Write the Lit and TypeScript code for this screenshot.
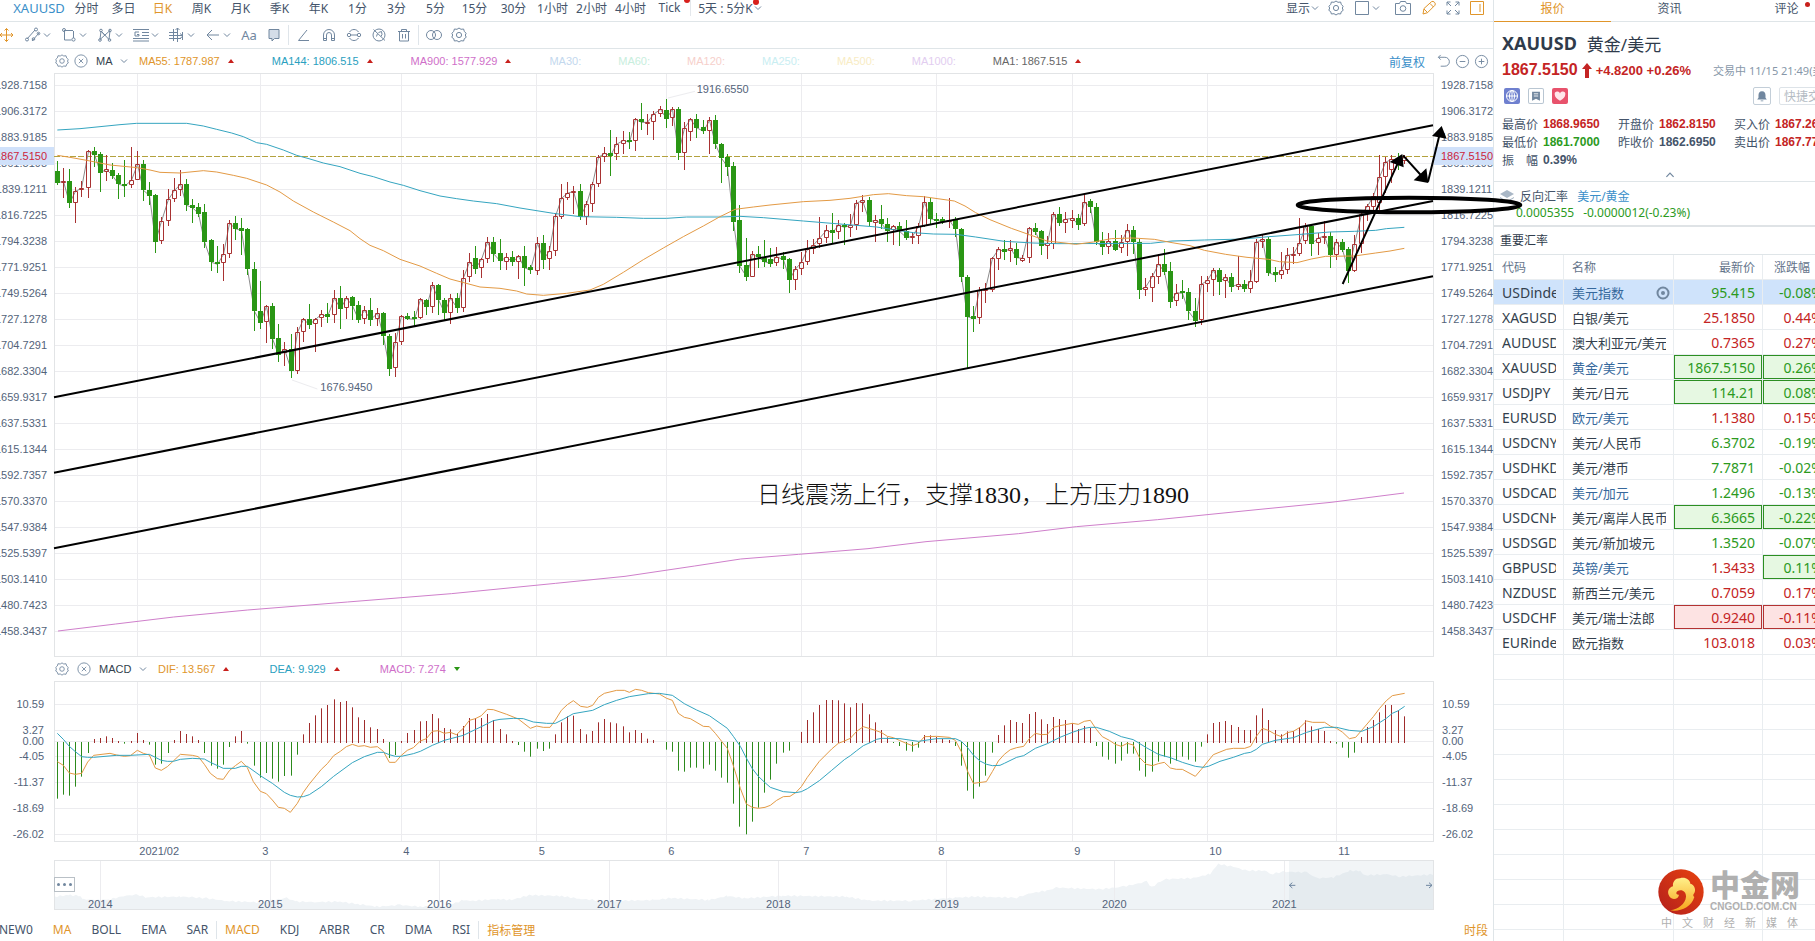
import { LitElement, html, svg, css, nothing } from "lit";
import { customElement } from "lit/decorators.js";
import { classMap } from "lit/directives/class-map.js";
import { styleMap } from "lit/directives/style-map.js";

const FIRST = 172;
const STEP = 18.45;

/* direction, high, body top, body bottom, low */
const CANDLES = `g272,303,338,345 r294,334,340,384 g297,334,400,414 r352,364,400,459 r334,355,361,380 r240,244,355,384 g231,244,254,290 g247,253,308,366 r255,298,307,332 g279,300,317,326
g309,315,342,386 g270,343,349,381 r231,331,346,355 r243,283,331,331 g270,283,361,392 g336,361,377,405 g372,375,515,548 r441,454,514,522 r357,388,454,467 r324,361,388,396
r301,343,361,378 g327,343,406,423 g387,405,413,459 g400,412,431,440 g402,427,515,534 g508,510,577,603 g528,577,583,608 r522,553,580,633 r450,460,553,563 g438,460,476,510
g445,475,482,555 g474,477,598,616 g576,598,724,783 g633,724,758,776 r705,709,757,819 g700,709,806,837 g763,804,854,876 r816,838,850,887 g792,838,902,924 r770,787,902,913
r744,748,787,815 g702,747,764,777 r744,748,763,846 r720,733,745,770 g699,733,740,758 r660,685,734,759 g648,685,716,777 r678,685,715,746 g678,682,707,750 g693,706,749,758
r709,721,748,761 g684,721,749,767 r715,730,748,767 g726,730,799,825 g793,799,896,918 r790,817,895,921 r736,739,817,824 g729,739,746,749 g723,742,748,768 r684,688,745,748
g688,691,712,736 r636,646,712,728 g642,646,689,734 g684,689,728,749 r673,685,728,762 g669,685,715,730 r600,623,715,725 r549,577,622,635 g528,565,596,611 r564,568,595,624
r501,517,568,579 g501,517,551,575 g507,550,574,599 r549,560,577,601 g543,561,577,588 r556,559,577,626 g528,559,593,647 g585,592,601,612 r502,520,604,614 g496,519,569,597
r529,542,568,599 r430,439,542,557 r342,385,442,446 r336,370,385,391 r349,364,370,432 g342,363,440,449 r393,403,440,464 r336,343,403,425 r255,262,343,351 r232,250,262,276
g180,250,257,317 r202,223,253,271 r184,211,223,251 g187,211,217,236 r144,148,214,242 g99,148,157,179 r132,157,163,194 r123,133,157,209 r109,118,133,140 g87,121,146,173
r112,118,145,167 g112,118,250,269 r157,175,250,299 r144,148,187,212 g132,148,173,205 g150,172,184,193 r142,151,184,253 g135,151,223,237 g220,223,265,338 g252,262,290,317
g276,289,455,483 g405,451,587,609 g504,586,620,632 r543,553,620,620 g528,553,562,594 g510,564,575,590 g535,567,581,591 r531,560,580,588 g545,557,569,597 g564,568,629,668
r588,597,629,660 r547,577,598,615 r510,538,577,585 r508,525,538,551 r441,505,523,534 r465,481,505,519 g430,481,488,521 r451,466,485,508 g460,466,472,525 r433,466,473,500
r391,400,466,480 r376,391,400,426 g381,391,455,467 r436,451,458,516 g405,448,461,476 g445,461,482,515 r465,469,481,525 g456,469,484,528 g451,484,503,509 r487,499,505,522
r460,469,499,521 r379,397,469,472 g384,397,446,463 g429,446,451,474 g442,448,455,463 r384,451,457,473 g441,451,478,502 g473,477,621,637 g615,621,740,893 g708,738,746,785
r652,660,743,762 r640,657,664,699 r561,565,659,666 r531,538,568,600 g510,538,545,571 r511,535,544,575 g519,538,563,585 r555,565,573,575 r472,475,563,578 g459,475,485,494
g480,483,527,556 r499,520,527,566 r426,433,523,536 g411,433,458,468 r427,448,460,488 r421,445,452,473 g432,445,465,480 r372,397,463,467 g387,394,412,428 g400,411,516,525
g486,514,532,556 r489,514,532,551 g480,514,540,542 r496,516,535,549 r462,479,516,557 g468,480,516,552 g507,516,659,687 r625,652,659,677 r609,619,653,695 r553,582,620,641
g537,583,606,615 g577,604,696,713 r642,668,694,707 g630,662,670,687 g654,666,724,750 g685,724,752,770 r618,643,749,766 r619,631,643,665 r594,601,631,677 g595,600,635,674
r613,622,634,684 g609,622,650,665 r559,643,650,660 g630,643,656,667 r600,634,656,668 r508,517,635,640 r496,508,517,534 g502,507,608,617 g590,606,616,636 r546,601,616,627
r535,556,601,611 r531,552,558,581 r445,520,553,558 r460,469,514,522 g462,467,521,557 r490,504,520,555 r454,498,505,522 g487,498,555,593 r507,516,555,570 g507,516,539,546
g531,537,602,638 r496,523,602,607 r427,433,523,550 r402,409,433,452 r369,378,412,430 r256,322,400,420 r262,277,322,370 r256,268,300,338 g249,268,274,299 r256,262,274,282`
  .split(/\s+/)
  .map((s) => ({ up: s[0] === "r", v: s.slice(1).split(",").map(Number) }));

const MACD_BARS = [
  476, 464, 467, 440, 410, 339, 297, 294, 289, 294, 303, 311, 303, 279, 300, 314, 374, 371, 339, 300,
  273, 282, 289, 300, 339, 377, 386, 374, 321, 289, 273, 311, 377, 413, 399, 416, 425, 408, 407, 344,
  283, 249, 226, 205, 195, 178, 186, 183, 202, 232, 240, 262, 267, 297, 354, 345, 303, 279, 270, 244,
  243, 222, 235, 264, 268, 282, 258, 234, 234, 234, 222, 240, 267, 283, 303, 315, 335, 350, 326, 333,
  326, 283, 247, 229, 227, 267, 283, 273, 247, 237, 247, 250, 259, 277, 270, 279, 296, 300, 307, 329,
  335, 392, 395, 383, 383, 386, 374, 392, 413, 428, 491, 560, 583, 545, 503, 458, 419, 371, 338, 332,
  307, 276, 240, 217, 195, 180, 180, 181, 190, 202, 189, 190, 223, 247, 270, 292, 309, 318, 332, 335,
  323, 285, 286, 291, 297, 300, 318, 377, 452, 476, 440, 407, 338, 285, 256, 240, 246, 249, 222, 216,
  238, 252, 231, 237, 240, 250, 267, 258, 264, 318, 350, 359, 371, 362, 341, 341, 392, 410, 395, 365,
  350, 371, 362, 350, 359, 365, 320, 283, 249, 246, 243, 255, 261, 270, 270, 226, 205, 240, 270, 283,
  274, 273, 261, 241, 259, 267, 273, 303, 311, 323, 353, 338, 291, 261, 240, 217, 195, 195, 211, 229,
];

const MA144 =
  "172,180 240,176 300,170 360,164 410,160 560,160 610,168 650,178 695,189 730,200 770,218 800,223 850,240 890,256 930,267 970,279 1020,290 1080,310 1120,320 1170,336 1210,346 1260,362 1320,378 1370,386 1420,393 1490,401 1560,414 1660,430 1740,440 1850,442 1930,445 2000,445 2060,441 2160,441 2220,439 2290,443 2410,453 2520,462 2630,471 2680,479 2740,488 2800,492 2868,493 2927,501 3013,514 3099,519 3174,521 3452,520 3516,513 3613,510 3731,507 3806,500 3891,494 3988,486 4063,484 4127,481 4159,476 4213,472";
const MA55 =
  "172,256 210,262 260,271 330,285 412,293 450,300 480,307 540,309 610,302 650,306 700,316 740,325 800,345 840,366 880,393 940,426 1000,456 1050,482 1080,506 1110,526 1150,542 1200,568 1260,588 1310,610 1350,627 1410,643 1440,651 1500,655 1550,663 1580,672 1630,676 1700,670 1770,660 1810,643 1870,607 1930,569 1990,534 2050,500 2110,468 2160,440 2205,418 2260,411 2310,405 2410,395 2490,391 2550,385 2620,374 2665,371 2720,377 2770,380 2820,387 2863,393 2895,408 2927,428 2970,449 3034,475 3088,494 3141,513 3195,519 3227,523 3281,516 3334,506 3399,504 3463,508 3516,518 3570,527 3613,541 3677,553 3741,562 3806,568 3838,575 3891,578 3934,567 3977,559 4063,558 4127,549 4170,543 4213,535";
const MA900 =
  "174,1683 347,1662 521,1641 743,1620 1042,1596 1354,1571 1667,1540 1875,1519 2084,1488 2222,1467 2396,1453 2604,1436 2778,1415 3056,1391 3229,1370 3473,1349 3750,1321 3993,1297 4212,1269";
const DIF =
  "172,365 190,376 208,399 226,403 245,400 263,366 281,346 330,340 350,345 373,349 391,347 412,331 430,340 448,345 466,384 484,391 502,380 520,363 541,343 577,346 595,350 613,373 631,400 652,416 670,418 688,392 706,377 724,364 742,383 760,425 781,454 799,461 817,480 835,502 853,505 871,517 892,490 910,457 928,432 964,388 982,371 1001,347 1021,334 1039,320 1057,313 1075,319 1093,317 1111,322 1132,320 1150,334 1168,367 1186,367 1204,346 1222,331 1240,323 1261,303 1279,296 1297,274 1315,272 1333,280 1351,277 1369,284 1390,265 1408,241 1426,236 1444,227 1462,208 1480,209 1520,223 1555,237 1591,265 1610,258 1630,262 1650,262 1666,240 1684,211 1702,194 1720,182 1742,199 1762,202 1778,196 1795,172 1813,160 1850,151 1873,151 1888,157 1907,148 1925,151 1945,158 1978,162 2000,175 2017,181 2035,220 2053,232 2071,236 2110,259 2128,260 2146,280 2165,304 2182,325 2200,377 2221,445 2239,492 2257,502 2275,505 2295,502 2311,496 2330,481 2350,470 2370,469 2388,457 2404,440 2422,412 2458,364 2495,327 2515,310 2533,303 2551,295 2570,274 2590,260 2626,271 2645,278 2662,289 2680,293 2698,301 2719,310 2737,317 2755,311 2773,290 2810,289 2848,292 2866,301 2884,335 2902,392 2920,430 2959,425 2977,395 2995,363 3013,343 3031,329 3050,323 3071,319 3088,296 3106,280 3124,284 3142,283 3161,262 3180,257 3217,250 3235,253 3253,244 3271,241 3289,268 3307,290 3328,301 3346,313 3364,319 3382,310 3400,315 3418,352 3439,373 3457,377 3475,371 3493,367 3511,384 3529,388 3547,388 3586,409 3604,388 3640,344 3680,328 3700,325 3734,325 3752,319 3769,289 3787,265 3805,271 3826,283 3844,290 3862,278 3880,274 3900,262 3920,243 3938,247 3974,247 3992,259 4010,265 4028,277 4048,296 4067,292 4085,271 4120,230 4138,206 4159,182 4177,167 4214,160";
const DEA =
  "172,280 190,298 208,319 226,335 245,350 263,352 281,352 350,346 391,346 448,343 466,352 484,361 502,364 520,364 541,358 577,355 613,357 631,367 670,385 706,385 724,379 742,379 781,407 817,430 853,457 871,466 892,471 910,470 928,464 964,440 1001,409 1057,368 1093,350 1132,337 1150,337 1168,344 1186,349 1204,349 1240,341 1261,334 1297,316 1333,301 1390,286 1444,260 1480,242 1500,238 1540,235 1570,236 1600,246 1640,250 1666,250 1690,238 1720,221 1778,211 1813,194 1850,181 1888,170 1945,161 1978,160 2017,166 2053,191 2090,210 2128,227 2182,265 2200,289 2221,319 2239,354 2257,386 2275,409 2295,428 2311,442 2350,455 2388,458 2404,455 2422,446 2458,422 2495,391 2533,359 2551,347 2570,332 2590,317 2610,308 2630,298 2645,295 2700,296 2755,304 2810,296 2866,296 2884,304 2902,322 2920,345 2940,363 2960,373 2977,377 3000,376 3013,370 3050,352 3071,347 3106,325 3142,311 3180,292 3217,277 3253,265 3271,262 3289,262 3328,274 3364,290 3400,299 3439,323 3475,343 3511,353 3547,367 3586,379 3610,382 3625,379 3660,364 3700,352 3734,340 3752,337 3769,328 3787,313 3826,301 3880,293 3920,277 3974,262 4010,262 4048,271 4085,274 4120,260 4159,235 4177,220 4195,212 4214,199";
const HISTORY: [number, number][] = [
  [162, 770], [210, 765], [240, 768], [250, 778], [300, 780], [330, 778], [370, 768], [410, 764], [440, 772], [540, 770],
  [580, 772], [620, 775], [680, 783], [780, 787], [860, 774], [890, 785], [950, 786], [1020, 785], [1080, 793], [1130, 800],
  [1200, 795], [1260, 800], [1340, 798], [1390, 780], [1410, 783], [1493, 777], [1534, 780], [1589, 765], [1685, 768], [1741, 777],
  [1823, 783], [1961, 780], [2016, 774], [2126, 780], [2181, 768], [2236, 775], [2347, 767], [2539, 770], [2608, 782], [2732, 782],
  [2870, 773], [2925, 770], [3050, 773], [3090, 760], [3140, 752], [3170, 743], [3300, 748], [3370, 740], [3440, 725], [3455, 742],
  [3490, 718], [3580, 714], [3630, 702], [3655, 672], [3700, 680], [3740, 692], [3800, 692], [3810, 703], [3850, 695], [3920, 697],
  [3950, 715], [4000, 712], [4050, 692], [4080, 693], [4095, 706], [4160, 703], [4200, 710], [4302, 703],
];

const VIEW = { x: 162, w: 4140, price: { y: 9, h: 1752 }, macd: { y: 123, h: 483 }, nav: { y: 660, h: 150 } };
const MONTHS: [string, number][] = [
  ["2021/02", 412], ["3", 781], ["4", 1204], ["5", 1610], ["6", 1999], ["7", 2404], ["8", 2809], ["9", 3217], ["10", 3622], ["11", 4009],
];
const YEARS: [string, number][] = [
  ["2014", 301], ["2015", 811], ["2016", 1318], ["2017", 1828], ["2018", 2335], ["2019", 2840], ["2020", 3343], ["2021", 3853],
];
const PRICES = Array.from({ length: 22 }, (_, i) => ({ text: (1928.71584 - i * 22.398675).toFixed(4), y: 46 + i * 78 }));
const MACD_TICKS: [string, number][] = [
  ["10.59", 193], ["3.27", 271], ["0.00", 304], ["-4.05", 349], ["-11.37", 427], ["-18.69", 505], ["-26.02", 583],
];

const snap = (v: number) => Math.round(v / 3) * 3;
const mid = (v: number) => Math.floor(v / 3) * 3 + 1.5;
const pctX = (x: number) => `${(((x - VIEW.x) / VIEW.w) * 100).toFixed(3)}%`;
const pctY = (y: number, v: { y: number; h: number }) => `${(((y - v.y) / v.h) * 100).toFixed(3)}%`;

function candlePaths() {
  let upWick = "", upBody = "", downWick = "", downBody = "", close = "";
  CANDLES.forEach((c, i) => {
    const x = mid(FIRST + STEP * i);
    const hi = snap(c.v[0]), top = snap(c.v[1]), lo = snap(c.v[3]);
    const bottom = Math.max(snap(c.v[2]), top + 6);
    if (c.up) {
      upWick += `M${x} ${hi}V${top}M${x} ${bottom}V${Math.max(lo, bottom)}`;
      upBody += `M${x - 6} ${top + 1.5}h12V${bottom - 1.5}h-12z`;
    } else {
      downWick += `M${x} ${hi}V${lo}`;
      downBody += `M${x - 7.5} ${top}h15V${bottom}h-15z`;
    }
    close += `${x},${c.up ? c.v[1] : c.v[2]} `;
  });
  return { upWick, upBody, downWick, downBody, close };
}

const hline = (ys: number[]) => ys.map((y) => `M${VIEW.x} ${mid(y)}h${VIEW.w}`).join("");
const vline = (xs: number[], y: number, h: number) => xs.map((x) => `M${mid(x)} ${y}v${h}`).join("");

/* ---------- icons ---------- */

const ICONS: Record<string, unknown> = {
  move: svg`<path d="M6.500 1.500v13M0 8h13M4.500 3.500l2-2 2 2M4.500 12.500l2 2 2-2M2 6 0 8l2 2M11 6l2 2-2 2"/>`,
  trend: svg`<path d="M2 12 10 3M7 14l7-8"/><circle cx="2" cy="12.500" r="1.500"/><circle cx="11" cy="2.500" r="1.500"/><circle cx="8.500" cy="12" r="1.300"/><circle cx="13.500" cy="6.500" r="1.300"/>`,
  rect: svg`<path d="M3 3.500h9M3.500 4v9h7M12.500 4v7"/><circle cx="3" cy="3" r="1.500"/><circle cx="12.500" cy="12.500" r="1.600"/>`,
  pattern: svg`<path d="M3 12.500 4 4l8 8.500L13 3.500 3 12.500M4 4l4 4.500"/><circle cx="4" cy="3.500" r="1.300"/><circle cx="13" cy="3.500" r="1.300"/><circle cx="3" cy="13" r="1.300"/><circle cx="12.500" cy="13" r="1.300"/>`,
  fib: svg`<path d="M0 2.500h16M9 5.500h7M9 8.500h7M0 11.500h16M0 14h16M6 5H2v4h4V7.500H4"/>`,
  measure: svg`<path d="M4.500 2v12M0 5.500h9M0 11.500h12M8.500 1v14M13.500 5v8M6.500 3l2-2 2 2M11 6.500 14 9l-3 2.500M0 8.500h14"/>`,
  arrow: svg`<path d="M14 8H2M7 3 2 8l5 5"/>`,
  comment: svg`<path class="soft" d="M3 2.500h10v9H8.500L6 14v-2.500H3z"/>`,
  angle: svg`<path d="M13 13.500H2.500L11 3"/>`,
  magnet: svg`<path d="M2.500 13.500V8a5.500 5.500 0 0 1 11 0v5.500h-3V8a2.500 2.500 0 0 0-5 0v5.500zM2.500 11.500h3M10.500 11.500h3"/>`,
  sync: svg`<path d="M3.500 5a5.300 5.300 0 0 1 9 0M3.500 11a5.300 5.300 0 0 0 9 0M4.500 8h7"/><circle cx="3" cy="8" r="1.700"/><circle cx="13" cy="8" r="1.700"/>`,
  hide: svg`<circle cx="8" cy="8" r="6"/><path d="M2.500 2.500l11.500 11M5.500 9.500l1-3M7.500 5.500l3-1 .5 3-1 2"/>`,
  trash: svg`<path d="M2 4.500h12M5.500 4.500v-2h5v2M3.500 4.500v9.500h9V4.500M6.500 7v4.500M9.500 7v4.500"/>`,
  rings: svg`<circle cx="5" cy="8" r="4.500"/><circle cx="11" cy="8" r="4.500"/>`,
  gear: svg`<path d="M8 1l2 1.300 2.600-.3.700 2.500 1.900 1.800L14.300 8l.9 2.300-1.900 1.400-.7 2.300-2.600-.3L8 15l-2-1.300-2.600.3-.7-2.300L.8 10.300 1.700 8 .8 6.300l1.900-1.800.7-2.500 2.600.3z"/><circle cx="8" cy="8" r="2.600"/>`,
  close: svg`<circle cx="8" cy="8" r="7"/><path d="M5.500 5.500l5 5M10.500 5.500l-5 5"/>`,
  square: svg`<path d="M1.500 1.500h13v13h-13z"/>`,
  camera: svg`<path d="M.5 3.500h4l1-2h5l1 2h4v11H.5z"/><circle cx="8" cy="8.500" r="2.800"/>`,
  pencil: svg`<path d="M2 14l1-5.500 7.500-6.800q1.500-1 3 .6t.4 3L6.500 12.700zM9 3.500l3.500 3.500M3 9l3.500 3.500"/>`,
  full: svg`<path d="M2 5.500V2h3.500M2 2l4 4M10.500 2H14v3.500M14 2l-4 4M2 10.500V14h3.500M2 14l4-4M14 10.500V14h-3.500M14 14l-4-4"/>`,
  panel: svg`<path d="M1.500 1.500h13v13h-13zM11 4v8"/>`,
  undo: svg`<path d="M2.500 3.500h7a4.500 4.500 0 0 1 0 9.500H5M5 1 2.500 3.500 5 6"/>`,
  minus: svg`<circle cx="8" cy="8" r="6.500"/><path d="M5 8h6"/>`,
  plus: svg`<circle cx="8" cy="8" r="6.500"/><path d="M5 8h6M8 5v6"/>`,
  globe: svg`<circle cx="8" cy="8" r="5.500"/><ellipse cx="8" cy="8" rx="2.500" ry="5.500"/><path d="M2.500 8h11M8 2.500v11"/>`,
  mark: svg`<path class="solid" d="M3.500 3h9v10.500L8 11l-4.500 2.500z"/><path class="light" d="M5.500 5.500h5M5.500 8h5"/>`,
  heart: svg`<path class="solid" d="M8 13.500C4 10.800 2 9 2 6.500a3 3 0 0 1 6-1.300 3 3 0 0 1 6 1.300C14 9 12 10.800 8 13.500z"/>`,
  bell: svg`<path class="solid" d="M8 2.500c3 0 4 2.200 4 4.500v3l1.500 2h-11L4 10V7c0-2.300 1-4.500 4-4.500zM6.500 13h3v1h-3z"/>`,
  eye: svg`<circle class="bold" cx="8" cy="8" r="5.500"/><circle class="solid" cx="8" cy="8" r="2"/>`,
  layers: svg`<path class="pale" d="M8 2l7 4-7 4-7-4zM1 9l7 4 7-4v1l-7 4.500L1 10z"/>`,
};

const icon = (name: string) => html`<svg class="icon" viewBox="0 0 16 16" aria-hidden="true">${ICONS[name]}</svg>`;
const chevron = html`<svg class="chev" viewBox="0 0 10 10" aria-hidden="true"><path d="M2 3.500l3 3 3-3" /></svg>`;
const triangle = (down = false) =>
  html`<svg class=${classMap({ tri: true, down })} viewBox="0 0 6 4" aria-hidden="true"><path d=${down ? "M0 0h6L3 4z" : "M0 4h6L3 0z"} /></svg>`;

const shared = css`
  button {
    font: inherit;
    color: inherit;
    background: none;
    border: 0;
    padding: 0;
    margin: 0;
    white-space: nowrap;
    display: flex;
    align-items: center;
    justify-content: center;
  }
  .icon {
    width: 16px;
    height: 16px;
    flex: none;
    fill: none;
    stroke: #71879f;
    stroke-width: 1;
  }
  .icon .solid {
    fill: currentColor;
    stroke: none;
  }
  .icon .soft {
    fill: #d4dde8;
  }
  .icon .pale {
    fill: #a9b7c6;
    stroke: none;
  }
  .icon .light {
    stroke: #fff;
  }
  .icon .bold {
    stroke-width: 2;
  }
  .chev {
    width: 10px;
    height: 10px;
    flex: none;
    fill: none;
    stroke: #71879f;
  }
`;

/* ---------- toolbars ---------- */

const PERIODS = ["分时", "多日", "日K", "周K", "月K", "季K", "年K", "1分", "3分", "5分", "15分", "30分", "1小时", "2小时", "4小时", "Tick"];

@customElement("chart-toolbars")
class ChartToolbars extends LitElement {
  static styles = [
    shared,
    css`
      :host {
        display: block;
        color: #44546a;
        font-size: 12px;
      }
      .periods,
      .tools {
        display: flex;
        align-items: center;
        box-sizing: border-box;
        border-bottom: 1px solid #dfe5e8;
      }
      .periods {
        height: 22px;
        padding: 0 8px 6px 9px;
      }
      .periods button {
        width: 39px;
        height: 16px;
        position: relative;
      }
      .periods .symbol {
        width: 60px;
        font-size: 13px;
        color: #3a8fc9;
      }
      .periods .narrow {
        width: 35px;
      }
      .periods .active {
        color: #e0952a;
      }
      .periods .custom {
        width: 80px;
        margin-left: 1px;
        border-left: 1px solid #e4e8ec;
      }
      .dot {
        position: absolute;
        top: -3px;
        right: -1px;
        width: 6px;
        height: 6px;
        border-radius: 50%;
        background: #d8201c;
      }
      .custom .dot {
        top: -1px;
        right: 11px;
      }
      .view {
        margin-left: auto;
        display: flex;
        align-items: center;
        gap: 8px;
      }
      .view button {
        width: auto;
      }
      .view .split {
        gap: 1px;
        margin: 0 4px 0 2px;
      }
      .view .wide .icon {
        width: 20px;
      }
      .orange .icon {
        stroke: #e0952a;
      }
      .tools {
        height: 27px;
        gap: 9px;
      }
      .tools button {
        gap: 1px;
        height: 20px;
      }
      .tools .text {
        width: 16px;
        color: #71879f;
        font-size: 13px;
      }
      .rule {
        width: 1px;
        height: 20px;
        background: #dfe5ea;
        margin: 0 -2px 0 -3px;
      }
    `,
  ];
  render() {
    const menu = (n: string) => html`<button aria-label=${n}>${icon(n)}${chevron}</button>`;
    const plain = (n: string) => html`<button aria-label=${n}>${icon(n)}</button>`;
    return html`
      <nav class="periods">
        <button class="symbol">XAUUSD</button>
        ${PERIODS.map(
          (p) => html`<button class=${classMap({ narrow: p === "分时", active: p === "日K" })}>
            ${p}${p === "Tick" ? html`<i class="dot"></i>` : nothing}
          </button>`,
        )}
        <button class="custom">5天 : 5分K${chevron}<i class="dot"></i></button>
        <div class="view">
          <button>显示${chevron}</button>
          ${plain("gear")}
          <button class="split" aria-label="layout">${icon("square")}${chevron}</button>
          <button class="wide" aria-label="camera">${icon("camera")}</button>
          <button class="orange" aria-label="draw">${icon("pencil")}</button>
          ${plain("full")}
          <button class="orange" aria-label="panel">${icon("panel")}</button>
        </div>
      </nav>
      <div class="tools">
        <button class="orange" aria-label="move">${icon("move")}</button>
        ${["trend", "rect", "pattern", "fib", "measure", "arrow"].map(menu)}
        <button class="text">Aa</button>
        ${plain("comment")}
        <i class="rule"></i>
        ${["angle", "magnet", "sync", "hide", "trash"].map(plain)}
        <i class="rule"></i>
        ${["rings", "gear"].map(plain)}
      </div>
    `;
  }
}

/* ---------- charts ---------- */

@customElement("chart-area")
class ChartArea extends LitElement {
  static styles = [
    shared,
    css`
      :host {
        display: flex;
        flex-direction: column;
        flex: 1;
        min-height: 0;
        font-family: "Liberation Sans", "Noto Sans CJK SC", sans-serif;
        font-size: 11px;
        color: #53637a;
      }
      .legend {
        height: 24px;
        display: flex;
        align-items: center;
        padding: 0 4px 0 55px;
        white-space: nowrap;
      }
      .legend .icon {
        width: 14px;
        height: 14px;
      }
      .legend .name {
        width: 23px;
        padding-left: 8px;
        color: #333f4d;
      }
      .legend.macd .name {
        width: 39px;
      }
      .legend button + button {
        margin-left: 5px;
      }
      .legend.macd button + button {
        margin-left: 8px;
      }
      .legend .chev {
        margin-right: 10px;
      }
      .values {
        display: flex;
        gap: 37px;
      }
      .macd .values {
        gap: 39px;
      }
      .value {
        display: flex;
        align-items: center;
        gap: 8px;
      }
      .value .tri {
        margin-right: 1px;
      }
      .tri {
        width: 6px;
        height: 4px;
        fill: #c8201c;
      }
      .tri.down {
        fill: #2a9615;
      }
      .legend .actions {
        margin-left: auto;
        display: flex;
        align-items: center;
      }
      .actions .adjust {
        color: #3a8fc9;
        font-size: 12px;
        margin-right: 7px;
      }
      .legend .actions .icon {
        width: 15px;
        height: 15px;
      }
      .legend .actions button + button {
        margin-left: 4px;
      }
      .c55 { color: #e0952a; }
      .c144 { color: #2aa0c0; }
      .c900 { color: #cf6fc9; }
      .c30 { color: #c3d8ee; }
      .c60 { color: #c8eedd; }
      .c120 { color: #f6cfcb; }
      .c250 { color: #c9eef2; }
      .c500 { color: #f8ecc4; }
      .c1000 { color: #e2cdf0; }
      .c1 { color: #666; }
      .row {
        display: grid;
        grid-template-columns: 54px minmax(0, 1fr) 59px;
      }
      .main {
        flex: 1;
        min-height: 0;
      }
      .sub {
        height: 161px;
      }
      .months {
        height: 18px;
      }
      .history {
        height: 50px;
      }
      .cell,
      .axis {
        position: relative;
        min-width: 0;
        min-height: 0;
      }
      .main .cell {
        z-index: 1;
      }
      .plot {
        position: absolute;
        inset: 0;
        width: 100%;
        height: 100%;
        fill: none;
      }
      .plot.over {
        overflow: visible;
        pointer-events: none;
      }
      .plot path,
      .plot polyline,
      .plot ellipse {
        vector-effect: non-scaling-stroke;
      }
      .grid { stroke: #ececef; }
      .edge { stroke: #e2e4e6; }
      .dash { stroke: #b3a23e; stroke-dasharray: 6 2; }
      .up { stroke: #a83232; }
      .down-wick { stroke: #2a9615; }
      .down-body { fill: #2a9615; }
      .grey { stroke: #8c8c8c; }
      .l55 { stroke: #e39a45; }
      .l144 { stroke: #35a5c0; }
      .l900 { stroke: #cf7fcb; }
      .bar-up { stroke: #a02c2c; }
      .bar-down { stroke: #2c8a1c; }
      .ink { stroke: #000; stroke-width: 2px; }
      .ring { stroke: #000; stroke-width: 4px; }
      .head { fill: #000; }
      .area { fill: #eff3f6; }
      .range { fill: rgba(190, 205, 215, 0.2); }
      .arrows { stroke: #6f86a0; }
      .tick,
      .now {
        position: absolute;
        line-height: 18px;
        height: 18px;
        margin-top: -9px;
      }
      .axis.left .tick,
      .axis.left .now {
        right: 0;
        padding-right: 7px;
      }
      .axis.left .small {
        padding-right: 10px;
      }
      .axis.right .tick,
      .axis.right .now {
        left: 0;
        padding-left: 7px;
      }
      .axis.right .small {
        padding-left: 8px;
      }
      .now {
        background: #d0e1fa;
        color: #cc1f3c;
        box-sizing: border-box;
        width: 100%;
        display: flex;
        justify-content: flex-end;
      }
      .axis.right .now {
        justify-content: flex-start;
      }
      .axis.left {
        overflow: hidden;
      }
      .month,
      .year,
      .mark {
        position: absolute;
        white-space: nowrap;
        line-height: 18px;
      }
      .month {
        padding-left: 2px;
      }
      .year {
        bottom: -3px;
        width: 60px;
        margin-left: -30px;
        text-align: center;
      }
      .mark {
        margin-top: -9px;
      }
      .note {
        position: absolute;
        margin: -18px 0 0;
        line-height: 36px;
        white-space: nowrap;
        color: #111;
        font-family: "Liberation Serif", "Noto Sans CJK SC", serif;
        font-weight: 300;
        font-size: 24px;
      }
      .more {
        position: absolute;
        left: 0;
        top: 17px;
        width: 21px;
        height: 15px;
        border: 1px solid #b9c0c6;
        background: #fff;
        gap: 3px;
      }
      .more i {
        width: 3px;
        height: 3px;
        border-radius: 50%;
        background: #71879f;
      }
    `,
  ];

  private value(cls: string, text: string, dir = 0) {
    return html`<span class="value ${cls}">${text}${dir ? triangle(dir < 0) : nothing}</span>`;
  }

  private priceAxis(side: string) {
    return html`<div class="axis ${side}">
      ${PRICES.map((p) => html`<span class="tick" style=${styleMap({ top: pctY(p.y, VIEW.price) })}>${p.text}</span>`)}
      <span class="now" style=${styleMap({ top: pctY(259, VIEW.price) })}>1867.5150</span>
    </div>`;
  }

  private macdAxis(side: string) {
    return html`<div class="axis ${side}">
      ${MACD_TICKS.map(([t, y]) => html`<span class="tick small" style=${styleMap({ top: pctY(y, VIEW.macd) })}>${t}</span>`)}
    </div>`;
  }

  render() {
    const p = candlePaths();
    const months = MONTHS.map((m) => m[1]);
    const { x, w } = VIEW;
    let barUp = "", barDown = "";
    MACD_BARS.forEach((y, i) => {
      const bx = mid(FIRST + STEP * i);
      if (y < 306) barUp += `M${bx} ${y}V309`;
      else if (y > 307) barDown += `M${bx} 306V${y}`;
    });
    const ragged = HISTORY.map(([hx, hy], i) => {
      const n = HISTORY[i + 1];
      if (!n) return `${hx},${hy}`;
      let out = "";
      for (let k = 0; hx + k < n[0]; k += 9) {
        const t = k / (n[0] - hx);
        out += `${hx + k},${(hy + (n[1] - hy) * t + Math.sin((hx + k) * 1.7) * 2.5).toFixed(1)} `;
      }
      return out;
    }).join(" ");
    return html`
      <div class="legend">
        <button aria-label="settings">${icon("gear")}</button>
        <button aria-label="remove">${icon("close")}</button>
        <span class="name">MA</span>${chevron}
        <div class="values">
          ${this.value("c55", "MA55: 1787.987", 1)} ${this.value("c144", "MA144: 1806.515", 1)}
          ${this.value("c900", "MA900: 1577.929", 1)} ${this.value("c30", "MA30:")} ${this.value("c60", "MA60:")}
          ${this.value("c120", "MA120:")} ${this.value("c250", "MA250:")} ${this.value("c500", "MA500:")}
          ${this.value("c1000", "MA1000:")} ${this.value("c1", "MA1: 1867.515", 1)}
        </div>
        <div class="actions">
          <button class="adjust">前复权</button>
          <button aria-label="reset">${icon("undo")}</button>
          <button aria-label="zoom out">${icon("minus")}</button>
          <button aria-label="zoom in">${icon("plus")}</button>
        </div>
      </div>
      <div class="row main">
        ${this.priceAxis("left")}
        <div class="cell">
          <svg class="plot" viewBox="${x} ${VIEW.price.y} ${w} ${VIEW.price.h}" preserveAspectRatio="none">
            <path class="grid" d=${hline(PRICES.map((q) => q.y)) + vline(months, VIEW.price.y, VIEW.price.h)} />
            <path class="edge" d=${hline([10, 1758]) + vline([163, 4299], VIEW.price.y, VIEW.price.h)} />
            <path class="dash" d=${hline([259])} />
            <polyline class="grey" points=${p.close} />
            <path class="up" d=${p.upWick + p.upBody} />
            <path class="down-wick" d=${p.downWick} />
            <path class="down-body" d=${p.downBody} />
            <polyline class="l144" points=${MA144} />
            <polyline class="l55" points=${MA55} />
            <polyline class="l900" points=${MA900} />
            <path class="grid" d="M2004 84L2085 64M876 930L952 957" />
          </svg>
          <span class="mark" style=${styleMap({ left: pctX(2090), top: pctY(57, VIEW.price) })}>1916.6550</span>
          <span class="mark" style=${styleMap({ left: pctX(961), top: pctY(951, VIEW.price) })}>1676.9450</span>
          <p class="note" style=${styleMap({ left: pctX(2271), top: pctY(1275, VIEW.price) })}>日线震荡上行，支撑1830，上方压力1890</p>
          <svg class="plot over" viewBox="${x} ${VIEW.price.y} ${w} ${VIEW.price.h}" preserveAspectRatio="none">
            <path class="ink" d="M162 982L4299 166M162 1208L4299 393M162 1435L4299 619" />
            <ellipse class="ring" cx="4227" cy="405" rx="334" ry="22" />
            <path class="ink" d="M4028 642L4200 265M4209 256L4276 330M4284 335L4322 180" />
            <path class="head" d="M4207 252L4169 276L4211 292zM4285 339L4241 331L4279 295zM4325 168L4296 198L4340 206z" />
          </svg>
        </div>
        ${this.priceAxis("right")}
      </div>
      <div class="legend macd">
        <button aria-label="settings">${icon("gear")}</button>
        <button aria-label="remove">${icon("close")}</button>
        <span class="name">MACD</span>${chevron}
        <div class="values">
          ${this.value("c55", "DIF: 13.567", 1)} ${this.value("c144", "DEA: 9.929", 1)} ${this.value("c900", "MACD: 7.274", -1)}
        </div>
      </div>
      <div class="row sub">
        ${this.macdAxis("left")}
        <div class="cell">
          <svg class="plot" viewBox="${x} ${VIEW.macd.y} ${w} ${VIEW.macd.h}" preserveAspectRatio="none">
            <path class="grid" d=${hline(MACD_TICKS.map((t) => t[1])) + vline(months, VIEW.macd.y, VIEW.macd.h)} />
            <path class="edge" d=${hline([124, 604]) + vline([163, 4299], VIEW.macd.y, VIEW.macd.h)} />
            <path class="bar-up" d=${barUp} />
            <path class="bar-down" d=${barDown} />
            <polyline class="l55" points=${DIF} />
            <polyline class="l144" points=${DEA} />
          </svg>
        </div>
        ${this.macdAxis("right")}
      </div>
      <div class="row months">
        <span></span>
        <div class="cell">
          ${MONTHS.map(([t, mx]) => html`<span class="month" style=${styleMap({ left: pctX(mx) })}>${t}</span>`)}
        </div>
      </div>
      <div class="row history">
        <span></span>
        <div class="cell">
          <svg class="plot" viewBox="${x} ${VIEW.nav.y} ${w} ${VIEW.nav.h}" preserveAspectRatio="none">
            <polygon class="area" points="162,810 ${ragged} 4302,810" />
            <path class="grid" d=${vline(YEARS.map((y) => y[1]), 660, 150)} />
            <path class="range" d="M3867 661H4299V810H3867z" />
            <path class="edge" d=${hline([661, 808]) + vline([163, 4299], 660, 150)} />
            <path class="arrows" d="M3886 736H3868M3877 728L3868 736L3877 744M4278 736H4296M4287 728L4296 736L4287 744" />
          </svg>
          <button class="more" aria-label="more"><i></i><i></i><i></i></button>
          ${YEARS.map(([t, yx]) => html`<span class="year" style=${styleMap({ left: pctX(yx) })}>${t}</span>`)}
        </div>
      </div>
    `;
  }
}

/* ---------- quotes ---------- */

type Quote = [code: string, name: string, price: string, change: string, red: boolean, linked: boolean, flashPrice?: boolean, flashChange?: boolean];
const QUOTES: Quote[] = [
  ["USDindex", "美元指数", "95.415", "-0.08%", false, true],
  ["XAGUSD", "白银/美元", "25.1850", "0.44%", true, false],
  ["AUDUSD", "澳大利亚元/美元", "0.7365", "0.27%", true, false],
  ["XAUUSD", "黄金/美元", "1867.5150", "0.26%", false, true, true, true],
  ["USDJPY", "美元/日元", "114.21", "0.08%", false, false, true, true],
  ["EURUSD", "欧元/美元", "1.1380", "0.15%", true, true],
  ["USDCNY", "美元/人民币", "6.3702", "-0.19%", false, false],
  ["USDHKD", "美元/港币", "7.7871", "-0.02%", false, false],
  ["USDCAD", "美元/加元", "1.2496", "-0.13%", false, true],
  ["USDCNH", "美元/离岸人民币", "6.3665", "-0.22%", false, false, true, true],
  ["USDSGD", "美元/新加坡元", "1.3520", "-0.07%", false, false],
  ["GBPUSD", "英镑/美元", "1.3433", "0.11%", true, true, false, true],
  ["NZDUSD", "新西兰元/美元", "0.7059", "0.17%", true, false],
  ["USDCHF", "美元/瑞士法郎", "0.9240", "-0.11%", true, false, true, true],
  ["EURindex", "欧元指数", "103.018", "0.03%", true, false],
];
const STATS = [
  ["最高价", "1868.9650", "red"], ["开盘价", "1862.8150", "red"], ["买入价", "1867.2600", "red"],
  ["最低价", "1861.7000", "green"], ["昨收价", "1862.6950", ""], ["卖出价", "1867.7700", "red"],
  ["振　幅", "0.39%", ""],
];

@customElement("quote-panel")
class QuotePanel extends LitElement {
  static styles = [
    shared,
    css`
      :host {
        display: flex;
        flex-direction: column;
        overflow: hidden;
        min-width: 0;
        color: #44546a;
        font-size: 12px;
      }
      .red { color: #c42424; }
      .green { color: #2c9a1e; }
      .tabs {
        display: flex;
        flex: none;
        height: 22px;
        width: 351px;
        box-sizing: border-box;
        border-bottom: 1px solid #dfe5e8;
      }
      .tabs button {
        flex: 1;
        height: 22px;
        padding-bottom: 6px;
        box-sizing: border-box;
        position: relative;
        border-bottom: 1px solid transparent;
      }
      .tabs .active {
        color: #e0952a;
        border-bottom-color: #e0952a;
      }
      .tabs i {
        position: absolute;
        top: 2px;
        right: 35px;
        width: 5px;
        height: 5px;
        border-radius: 50%;
        background: #c8201c;
      }
      .head {
        padding: 5px 0 0 8px;
        border-bottom: 1px solid #dfe5e8;
        white-space: nowrap;
      }
      .title {
        display: flex;
        align-items: center;
        gap: 10px;
        height: 32px;
        margin: 0;
        font-size: 17px;
        font-weight: 400;
        color: #2f3b4b;
      }
      .title b {
        font-size: 18px;
      }
      .price {
        display: flex;
        align-items: center;
        height: 22px;
        color: #c42424;
        font: bold 13px "Liberation Sans", sans-serif;
      }
      .price .last {
        font-size: 16px;
        width: auto;
      }
      .price svg {
        flex: none;
        width: 10px;
        height: 15px;
        margin: 0 4px 0 4px;
        fill: #c42424;
      }
      .price .state {
        margin-left: 22px;
        color: #8797a9;
        font: 11px "Noto Sans", "Noto Sans CJK SC", sans-serif;
      }
      .badges {
        display: flex;
        align-items: center;
        gap: 8px;
        height: 18px;
        margin: 6px 0 10px 2px;
      }
      .badges button {
        border-radius: 2px;
      }
      .badges .blue {
        background: #6f80cf;
      }
      .badges .blue .icon {
        stroke: #fff;
      }
      .badges .book {
        color: #71879f;
        box-shadow: inset 0 0 0 1px #b9c6d2;
      }
      .badges .like {
        background: #e8526c;
        color: #ffe6ea;
      }
      .badges .like .icon,
      .badges .book .icon {
        padding: 1px;
        box-sizing: border-box;
      }
      .badges .bell {
        margin-left: 177px;
        padding: 1px;
        box-sizing: border-box;
        width: 18px;
        height: 18px;
        color: #71879f;
        border: 1px solid #c3ced8;
      }
      .badges .bell .icon {
        width: 14px;
        height: 14px;
      }
      .badges .quick {
        height: 18px;
        padding: 0 4px;
        border: 1px solid #dde3e8;
        color: #b5bcc4;
        box-sizing: border-box;
      }
      .stats {
        display: grid;
        grid-template-columns: repeat(3, 116px);
        grid-auto-rows: 18px;
        margin: 0;
      }
      .stats div {
        display: flex;
        align-items: center;
        gap: 5px;
      }
      .stats dd {
        margin: 0;
        font: bold 12px "Liberation Sans", sans-serif;
      }
      .fold {
        height: 12px;
        width: 335px;
      }
      .fold .chev {
        transform: rotate(180deg);
        width: 12px;
        height: 12px;
      }
      .reverse {
        display: grid;
        grid-template-columns: 17px auto;
        column-gap: 4px;
        grid-auto-rows: 17px;
        align-items: center;
        padding: 5px 0 4px 5px;
        border-bottom: 2px solid #dfe3e6;
        white-space: nowrap;
      }
      .reverse a {
        color: #3a8fc9;
        text-decoration: none;
        margin-left: 6px;
      }
      .reverse .rate {
        grid-column: 2;
        margin-left: -4px;
      }
      .rate span + span {
        margin-left: 9px;
      }
      .section {
        margin: 0;
        height: 27px;
        line-height: 28px;
        padding-left: 6px;
        font-size: 12px;
        font-weight: 400;
        color: #2f3b4b;
        border-bottom: 1px solid #dfe5e8;
      }
      table {
        flex: none;
        width: 337px;
        table-layout: fixed;
        border-collapse: separate;
        border-spacing: 0;
        font-size: 14px;
        color: #333f4d;
      }
      .code { width: 70px; }
      .name { width: 110px; }
      .last { width: 89px; }
      th,
      td {
        box-sizing: border-box;
        height: 25px;
        padding: 2px 7px 0 8px;
        text-align: left;
        font-weight: 400;
        white-space: nowrap;
        overflow: hidden;
        border-right: 1px solid #e9edf0;
        border-bottom: 1px solid #e9edf0;
        line-height: 20px;
      }
      th {
        font-size: 12px;
        color: #64748a;
      }
      td.name {
        font-size: 13px;
      }
      td.linked {
        color: #36689c;
      }
      .clip {
        display: flex;
        align-items: center;
        justify-content: space-between;
        overflow: hidden;
      }
      .selected .name .clip {
        margin-right: -5px;
      }
      .clip .icon {
        color: #71879f;
      }
      .num {
        text-align: right;
      }
      td.red { color: #c42424; }
      td.green { color: #2c9a1e; }
      .selected td {
        background: #cfe3fb;
      }
      td.flash {
        background: #e6f8e2;
        box-shadow: inset 0 0 0 1px #2c8f22;
      }
      td.flash.flash-red {
        background: #fde3e3;
        box-shadow: inset 0 0 0 1px #b43232;
      }
      .blank {
        flex: 1;
        background:
          linear-gradient(90deg, transparent 69px, #e9edf0 69px 70px, transparent 70px 179px, #e9edf0 179px 180px, transparent 180px 268px, #e9edf0 268px 269px, transparent 269px),
          repeating-linear-gradient(#fff 0 24px, #e9edf0 24px 25px);
      }
    `,
  ];
  render() {
    return html`
      <nav class="tabs">
        <button class="active">报价</button>
        <button>资讯</button>
        <button>评论<i></i></button>
      </nav>
      <section class="head">
        <h1 class="title"><b>XAUUSD</b>黄金/美元</h1>
        <div class="price">
          <span class="last">1867.5150</span>
          <svg viewBox="0 0 10 15" aria-hidden="true"><path d="M5 0l5 6H7v9H3V6H0z" /></svg>
          <span>+4.8200 +0.26%</span>
          <span class="state">交易中 11/15 21:49(美东)</span>
        </div>
        <div class="badges">
          <button class="blue" aria-label="web">${icon("globe")}</button>
          <button class="book" aria-label="notes">${icon("mark")}</button>
          <button class="like" aria-label="favourite">${icon("heart")}</button>
          <button class="bell" aria-label="alert">${icon("bell")}</button>
          <button class="quick">快捷交易</button>
        </div>
        <dl class="stats">
          ${STATS.map(([k, v, c]) => html`<div><dt>${k}</dt><dd class=${c}>${v}</dd></div>`)}
        </dl>
        <button class="fold" aria-label="fold">${chevron}</button>
      </section>
      <section class="reverse">
        ${icon("layers")}
        <div>反向汇率 <a href="#">美元/黄金</a></div>
        <div class="rate green"><span>0.0005355</span><span>-0.0000012(-0.23%)</span></div>
      </section>
      <h2 class="section">重要汇率</h2>
      <table>
        <thead>
          <tr>
            <th class="code">代码</th>
            <th class="name">名称</th>
            <th class="last num">最新价</th>
            <th>&nbsp;涨跌幅</th>
          </tr>
        </thead>
        <tbody>
          ${QUOTES.map(
            ([code, name, price, change, red, linked, fp, fc], i) => html`<tr class=${i ? "" : "selected"}>
              <td class="code"><div class="clip">${code}</div></td>
              <td class=${classMap({ name: true, linked })}>
                <div class="clip">${name}${i ? nothing : icon("eye")}</div>
              </td>
              <td class=${classMap({ last: true, num: true, red, green: !red, flash: !!fp, "flash-red": !!fp && red })}>${price}</td>
              <td class=${classMap({ num: true, red: red && code !== "GBPUSD", green: !red || code === "GBPUSD", flash: !!fc, "flash-red": code === "USDCHF" })}>
                ${change}
              </td>
            </tr>`,
          )}
        </tbody>
      </table>
      <div class="blank"></div>
    `;
  }
}

/* ---------- page ---------- */

@customElement("app-root")
class AppRoot extends LitElement {
  static styles = [
    shared,
    css`
      :host {
        display: grid;
        grid-template-columns: minmax(0, 1fr) 321px;
        position: relative;
        height: 100vh;
        overflow: hidden;
        background: #fff;
        font-family: "Noto Sans", "Noto Sans CJK SC", sans-serif;
        font-size: 12px;
        color: #44546a;
      }
      main {
        display: flex;
        flex-direction: column;
        min-width: 0;
        min-height: 0;
        position: relative;
        z-index: 1;
        border-right: 1px solid #dfe5e8;
      }
      .indicators {
        display: flex;
        align-items: center;
        gap: 20px;
        box-sizing: border-box;
        height: 31px;
        padding: 8px 5px 0 0;
        margin-left: -1px;
      }
      .indicators .on {
        color: #e0952a;
      }
      .indicators .rule {
        width: 1px;
        height: 18px;
        background: #dfe5ea;
        margin: 0 -12px;
      }
      .indicators .session {
        margin-left: auto;
      }
      .brand {
        position: absolute;
        right: 14px;
        bottom: 10px;
        width: 140px;
        color: #b0b0b0;
      }
      .brand .top {
        display: flex;
        gap: 6px;
        margin-left: -3px;
      }
      .brand svg {
        width: 46px;
        height: 46px;
        flex: none;
      }
      .brand .zh {
        font-size: 30px;
        font-weight: 900;
        line-height: 32px;
      }
      .brand .en {
        font: bold 10px/12px "Liberation Sans", sans-serif;
      }
      .brand .slogan {
        display: flex;
        justify-content: space-between;
        width: 137px;
        font-size: 11px;
        line-height: 16px;
      }
    `,
  ];
  render() {
    return html`
      <main>
        <chart-toolbars></chart-toolbars>
        <chart-area></chart-area>
        <nav class="indicators">
          <button>NEW0</button>
          <button class="on">MA</button>
          ${["BOLL", "EMA", "SAR"].map((t) => html`<button>${t}</button>`)}
          <i class="rule"></i>
          <button class="on">MACD</button>
          ${["KDJ", "ARBR", "CR", "DMA", "RSI"].map((t) => html`<button>${t}</button>`)}
          <i class="rule"></i>
          <button class="on">指标管理</button>
          <button class="on session">时段</button>
        </nav>
      </main>
      <quote-panel></quote-panel>
      <div class="brand">
        <div class="top">
          <svg viewBox="504 85 138 138" aria-hidden="true">
            <defs>
              <linearGradient id="r" x1="0" y1="1" x2="1" y2="0"><stop offset="0" stop-color="#b31f1c" /><stop offset="1" stop-color="#e8430f" /></linearGradient>
              <linearGradient id="g" x1="0" y1="0" x2="0" y2="1"><stop offset="0" stop-color="#fff08a" /><stop offset="1" stop-color="#f7a51c" /></linearGradient>
            </defs>
            <circle cx="573" cy="154" r="68" fill="url(#r)" />
            <path
              fill="url(#g)"
              d="M541 209C565 205 586 190 588 168C589 150 572 144 562 152C556 157 560 164 567 162C566 176 546 180 538 167C530 154 536 140 549 137C547 122 558 112 570 113C584 108 600 116 601 129C614 132 620 150 611 160C608 164 611 168 613 169C604 200 570 214 541 209Z"
            />
          </svg>
          <div>
            <div class="zh">中金网</div>
            <div class="en">CNGOLD.COM.CN</div>
          </div>
        </div>
        <div class="slogan">${[..."中文财经新媒体"].map((c) => html`<span>${c}</span>`)}</div>
      </div>
    `;
  }
}
